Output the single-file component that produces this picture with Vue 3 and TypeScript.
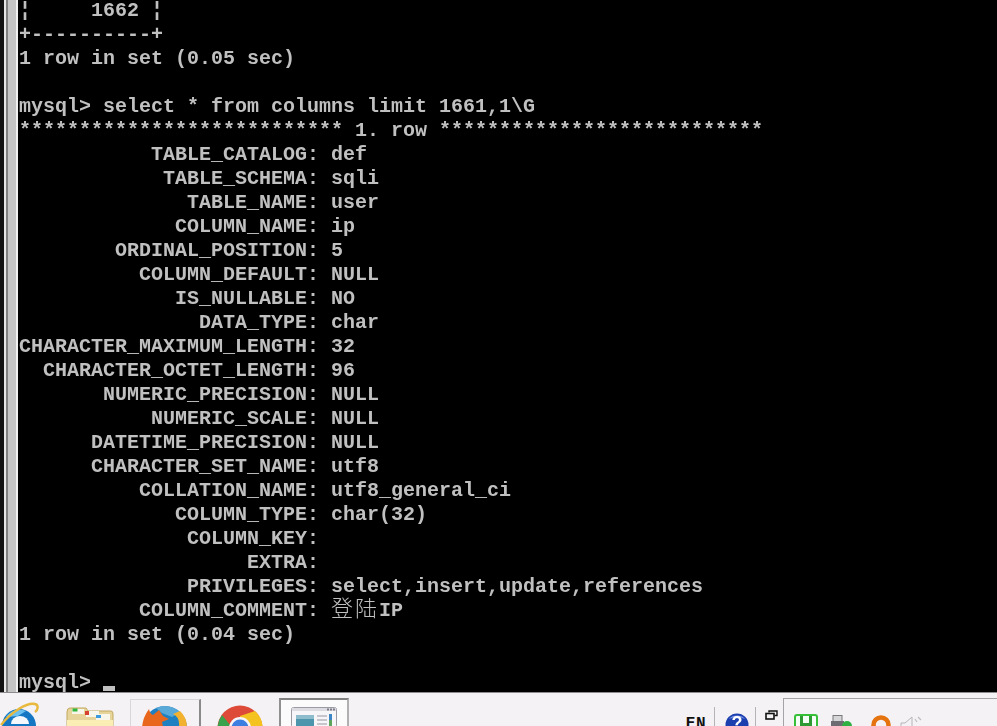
<script setup lang="ts">
interface Row { label: string; value: string; cjk?: string }

const head: string[] = [
  '¦     1662 ¦',
  '+----------+',
  '1 row in set (0.05 sec)',
  '',
  'mysql> select * from columns limit 1661,1\\G',
  '*************************** 1. row ***************************',
]

const rows: Row[] = [
  { label: 'TABLE_CATALOG', value: 'def' },
  { label: 'TABLE_SCHEMA', value: 'sqli' },
  { label: 'TABLE_NAME', value: 'user' },
  { label: 'COLUMN_NAME', value: 'ip' },
  { label: 'ORDINAL_POSITION', value: '5' },
  { label: 'COLUMN_DEFAULT', value: 'NULL' },
  { label: 'IS_NULLABLE', value: 'NO' },
  { label: 'DATA_TYPE', value: 'char' },
  { label: 'CHARACTER_MAXIMUM_LENGTH', value: '32' },
  { label: 'CHARACTER_OCTET_LENGTH', value: '96' },
  { label: 'NUMERIC_PRECISION', value: 'NULL' },
  { label: 'NUMERIC_SCALE', value: 'NULL' },
  { label: 'DATETIME_PRECISION', value: 'NULL' },
  { label: 'CHARACTER_SET_NAME', value: 'utf8' },
  { label: 'COLLATION_NAME', value: 'utf8_general_ci' },
  { label: 'COLUMN_TYPE', value: 'char(32)' },
  { label: 'COLUMN_KEY', value: '' },
  { label: 'EXTRA', value: '' },
  { label: 'PRIVILEGES', value: 'select,insert,update,references' },
  { label: 'COLUMN_COMMENT', value: 'IP', cjk: '登陆' },
]

const fmt = (r: Row): string => `${r.label.padStart(24, ' ')}: `
</script>

<template>
  <div class="screen">
    <div class="console">
      <div class="edge">
        <i class="e1"></i><i class="e2"></i><i class="e3"></i><i class="e4"></i><i class="e5"></i>
      </div>
      <div class="term">
        <div v-for="(l, i) in head" :key="'h' + i" class="line">{{ l }}</div>
        <div v-for="r in rows" :key="r.label" class="line">{{ fmt(r) }}<span v-if="r.cjk" class="cjk">{{ r.cjk }}</span>{{ r.value }}</div>
        <div class="line">1 row in set (0.04 sec)</div>
        <div class="line"></div>
        <div class="line">mysql> <span class="cursor"></span></div>
      </div>
    </div>

    <div class="taskbar">
      <svg class="ie icon" width="40" height="24" viewBox="0 0 40 24">
        <circle cx="19" cy="24" r="17" fill="#1577c4" />
        <path d="M6 15 A17 17 0 0 1 26 9 L18 14 Z" fill="#6cc0ee" />
        <ellipse cx="20" cy="22" rx="9" ry="8" fill="#f4f8fc" />
        <rect x="10" y="22" width="20" height="3" fill="#1577c4" />
        <path d="M1 23 C12 9 28 0 35 2 C39 3 38 8 35 10" fill="none" stroke="#e8b93c" stroke-width="2.400" />
      </svg>

      <svg class="folder icon" width="48" height="21" viewBox="0 0 48 21">
        <path d="M1 21 V6 Q1 2 4 2 H20 L22 5 H45 Q47 5 47 8 V21 Z" fill="#e6d49a" stroke="#c2a95f" />
        <rect x="6" y="3" width="12" height="5" fill="#f8f6ea" />
        <rect x="6.500" y="2.500" width="5" height="3" fill="#2fb63f" />
        <rect x="20" y="5" width="13" height="6" fill="#f8f6ea" />
        <rect x="19" y="5" width="4" height="4" fill="#d8402f" />
        <rect x="30" y="8" width="14" height="6" fill="#f8f6ea" />
        <rect x="30" y="9" width="5" height="3" fill="#3b9ade" />
        <path d="M1 14 H47 V21 H1 Z" fill="#faeeb4" />
      </svg>

      <div class="btn-ff">
        <svg class="icon" width="46" height="22" viewBox="0 0 46 22">
          <circle cx="23" cy="23" r="22" fill="#1e80c0" />
          <path d="M14 3 A22 22 0 0 1 38 7 L30 12 L20 8 Z" fill="#58a9d8" />
          <path d="M38 6 A22 22 0 0 1 45 23 L37 22 Q38 12 31 9 Z" fill="#f2b12f" />
          <path d="M0 22 Q1 12 7 4 Q8 9 11 10 L17 5 L21 11 L27 14 L20 17 L21 22 Z" fill="#e8671c" />
        </svg>
      </div>

      <svg class="chrome icon" width="46" height="21" viewBox="0 0 46 21">
        <circle cx="23" cy="23" r="22.500" fill="#dd4a38" />
        <path d="M23 23 L45.500 23 A22.500 22.500 0 0 0 38 6 L23 11 Z" fill="#f5c31f" />
        <path d="M23 23 L0.500 23 A22.500 22.500 0 0 1 5 10 L14 21 Z" fill="#3aa14d" />
        <circle cx="23" cy="23" r="11" fill="#f6f4f6" />
        <circle cx="23" cy="23" r="8.500" fill="#3d7fe0" />
      </svg>

      <div class="btn-active">
        <svg class="icon" width="46" height="19" viewBox="0 0 46 19">
          <rect x="0.500" y="0.500" width="45" height="20" rx="2" fill="#f6f6f8" stroke="#9b9ba3" />
          <rect x="1" y="1" width="44" height="3" fill="#dcdce2" />
          <rect x="36" y="1.500" width="2" height="2" fill="#7e7e88" />
          <rect x="39" y="1.500" width="2" height="2" fill="#7e7e88" />
          <rect x="42" y="1.500" width="2" height="2" fill="#7e7e88" />
          <rect x="5" y="8" width="18" height="11" fill="#4d94ad" />
          <rect x="5" y="8" width="18" height="4" fill="#8dbdcc" />
          <rect x="26" y="8" width="10" height="2" fill="#c6c6cc" />
          <rect x="26" y="12" width="10" height="2" fill="#c6c6cc" />
          <rect x="26" y="16" width="10" height="2" fill="#c6c6cc" />
          <rect x="38" y="7" width="3" height="6" fill="#3d86c6" />
          <rect x="38" y="13" width="3" height="6" fill="#5da55d" />
        </svg>
      </div>

      <div class="spacer"></div>

      <span class="lang">EN</span>
      <i class="sep sep-a"></i>
      <svg class="help icon" width="24" height="13" viewBox="0 0 24 13">
        <circle cx="12" cy="12" r="11.500" fill="#1c3fb0" />
        <path d="M4 6 A10 9 0 0 1 20 6 Q12 2 4 6 Z" fill="#7e9ae6" />
        <text x="12" y="16" text-anchor="middle" class="q">?</text>
      </svg>
      <i class="sep sep-b"></i>
      <svg class="restore" width="13" height="10" viewBox="0 0 13 10">
        <path d="M4 2.500 V1 H12 V5.500 H9.500" fill="none" stroke="#111" stroke-width="1.400" />
        <rect x="1" y="3.500" width="8" height="5.500" fill="none" stroke="#111" stroke-width="1.600" />
      </svg>

      <div class="tray">
        <svg class="t-green icon" width="24" height="12" viewBox="0 0 24 12">
          <rect x="1" y="1" width="22" height="14" rx="2" fill="#f6fff6" stroke="#35c038" stroke-width="2" />
          <rect x="6" y="2" width="3" height="10" fill="#2d9a33" />
          <rect x="15" y="2" width="3" height="10" fill="#2d9a33" />
          <rect x="6" y="9" width="12" height="3" fill="#2d9a33" />
        </svg>
        <svg class="t-usb icon" width="24" height="11" viewBox="0 0 24 11">
          <rect x="5" y="0.500" width="9" height="6" fill="#d5d5d8" stroke="#77777c" />
          <rect x="3" y="6" width="13" height="5" fill="#6c6c72" />
          <circle cx="19" cy="11" r="5" fill="#2eb043" />
        </svg>
        <svg class="t-ring icon" width="20" height="11" viewBox="0 0 20 11">
          <circle cx="10" cy="10" r="7.500" fill="none" stroke="#e5730f" stroke-width="4.500" />
        </svg>
        <svg class="t-speaker icon" width="24" height="10" viewBox="0 0 24 10">
          <path d="M1 10 V7 H5 L12 1 V10" fill="#f4f2f5" stroke="#b4b4b8" />
          <path d="M15 3 L17 6 M18 1 L21 4" stroke="#bcbcc0" stroke-width="1.200" fill="none" />
        </svg>
      </div>
    </div>
  </div>
</template>

<style scoped>
.screen {
  width: 997px;
  height: 726px;
  display: flex;
  flex-direction: column;
  overflow: hidden;
  background: #000;
}
.console {
  flex: 0 0 692px;
  display: flex;
  overflow: hidden;
  background: #000;
}
.edge {
  flex: 0 0 18px;
  display: flex;
}
.edge i { display: block; }
.e1 { width: 4px; background: #111; }
.e2 { width: 2px; background: #e6e6e6; }
.e3 { width: 2px; background: #808080; }
.e4 { width: 8px; background: #c4c4c4; }
.e5 { width: 2px; background: #efefef; }
.term {
  flex: 1;
  display: flex;
  flex-direction: column;
  gap: 6px;
  padding: 2px 0 0 1px;
  color: #c0c0c0;
  font-family: "Liberation Mono", "Noto Sans CJK SC", monospace;
  font-weight: 700;
  font-size: 20px;
  line-height: 18px;
  white-space: pre;
  filter: blur(0.35px);
}
.line { flex: 0 0 18px; }
.cjk {
  font-family: "Noto Sans CJK SC", sans-serif;
  font-weight: 300;
  font-size: 22px;
  line-height: 0;
  letter-spacing: 2px;
}
.cursor {
  display: inline-block;
  width: 12px;
  height: 5px;
  background: #c0c0c0;
  vertical-align: -3px;
}
.icon { filter: blur(0.4px); }
.taskbar {
  flex: 1;
  display: flex;
  align-items: flex-start;
  overflow: hidden;
  background: #f4f2f5;
  border-top: 1px solid #8c8c8c;
  font-family: "Liberation Mono", monospace;
}
.ie { margin: 9px 0 0 0; flex: none; }
.folder { margin: 13px 0 0 26px; flex: none; }
.btn-ff {
  box-sizing: border-box;
  flex: none;
  width: 71px;
  height: 40px;
  margin: 6px 0 0 16px;
  padding: 5px 0 0 11px;
  border-top: 1px solid #d9d7da;
  border-left: 1px solid #d9d7da;
  border-right: 2px solid #8a8a8a;
}
.chrome { margin: 12px 0 0 16px; flex: none; }
.btn-active {
  box-sizing: border-box;
  flex: none;
  width: 70px;
  height: 40px;
  margin: 5px 0 0 16px;
  padding: 7px 0 0 10px;
  background: #fbfbfc;
  border-top: 2px solid #808080;
  border-left: 2px solid #909090;
  border-right: 2px solid #b0b0b0;
}
.spacer { flex: 1; }
.lang {
  flex: none;
  margin: 24px 0 0 0;
  color: #111;
  font-weight: 700;
  font-size: 16px;
  line-height: 14px;
  letter-spacing: 0.500px;
}
.sep {
  flex: none;
  display: block;
  width: 1px;
  height: 30px;
  margin-top: 14px;
  background: #b4b4b8;
}
.sep-a { margin-left: 8px; }
.sep-b { margin-left: 6px; }
.help { flex: none; margin: 20px 0 0 10px; }
.q {
  font-family: "Liberation Sans", sans-serif;
  font-weight: 700;
  font-size: 18px;
  fill: #fff;
}
.restore { flex: none; margin: 17px 0 0 9px; }
.tray {
  box-sizing: border-box;
  flex: none;
  width: 214px;
  height: 40px;
  margin: 5px 0 0 5px;
  border-top: 1px solid #a4a4a8;
  border-left: 1px solid #a4a4a8;
  display: flex;
  align-items: flex-start;
  padding-left: 10px;
}
.t-green { flex: none; margin-top: 15px; }
.t-usb { flex: none; margin: 16px 0 0 10px; }
.t-ring { flex: none; margin: 16px 0 0 19px; }
.t-speaker { flex: none; margin: 17px 0 0 9px; }
</style>
